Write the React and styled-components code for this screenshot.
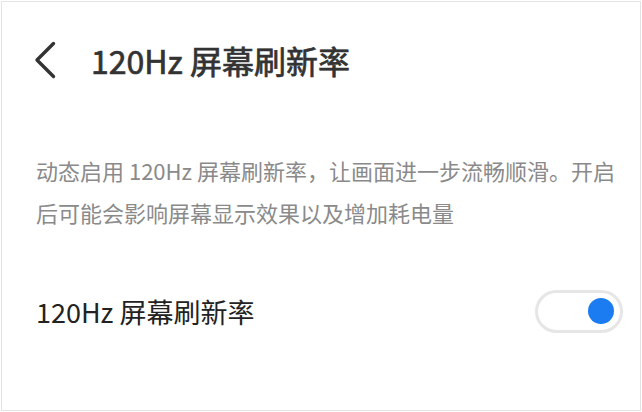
import React, { useState } from "react";
import styled, { createGlobalStyle } from "styled-components";

const GlobalStyle = createGlobalStyle`
  html, body {
    margin: 0;
    padding: 0;
    background: #ffffff;
  }
  body {
    font-family: "Noto Sans CJK SC", "Noto Sans", sans-serif;
  }
`;

const Screen = styled.div`
  box-sizing: border-box;
  margin: 1px;
  width: 640px;
  height: 410px;
  border: 1px solid #e4e4e4;
  background: #ffffff;
  display: flex;
  flex-direction: column;
  overflow: hidden;
`;

const Header = styled.header`
  height: 116px;
  display: flex;
  align-items: center;
  padding-left: 30px;
  gap: 33px;
`;

const BackButton = styled.button`
  border: 0;
  background: none;
  padding: 0;
  width: 26px;
  height: 40px;
  display: flex;
  align-items: center;
  justify-content: center;
  cursor: pointer;
`;

const Title = styled.h1`
  margin: 0;
  font-size: 32px;
  font-weight: 400;
  -webkit-text-stroke: 0.7px #333333;
  color: #333333;
`;

const Description = styled.p`
  margin: 31px 0 0;
  padding: 0 20px 0 34px;
  font-size: 22px;
  line-height: 42px;
  color: #8a8a8a;
  font-weight: 400;
`;

const Row = styled.div`
  margin-top: 36px;
  height: 84px;
  display: flex;
  align-items: center;
  justify-content: space-between;
  padding: 0 17px 0 34px;
`;

const Label = styled.span`
  font-size: 27px;
  color: #222222;
`;

const Track = styled.button`
  box-sizing: border-box;
  width: 88px;
  height: 43px;
  border-radius: 22px;
  border: 3px solid #e6e6e6;
  background: #ffffff;
  padding: 0 6px;
  display: flex;
  align-items: center;
  justify-content: ${(p) => (p.$on ? "flex-end" : "flex-start")};
  cursor: pointer;
`;

const Knob = styled.span`
  width: 26px;
  height: 26px;
  border-radius: 50%;
  background: ${(p) => (p.$on ? "#1a7cf0" : "#d0d0d0")};
`;

export default function App() {
  const [on, setOn] = useState(true);
  return (
    <>
      <GlobalStyle />
      <Screen>
        <Header>
          <BackButton aria-label="返回">
            <svg width="24" height="38" viewBox="0 0 24 38" fill="none">
              <path
                d="M20.5 2.5 L4 19 L20.5 35.5"
                stroke="#333333"
                strokeWidth="3.4"
                strokeLinecap="round"
                strokeLinejoin="round"
              />
            </svg>
          </BackButton>
          <Title>120Hz 屏幕刷新率</Title>
        </Header>
        <Description>
          动态启用 120Hz 屏幕刷新率，让画面进一步流畅顺滑。开启后可能会影响屏幕显示效果以及增加耗电量
        </Description>
        <Row>
          <Label>120Hz 屏幕刷新率</Label>
          <Track $on={on} onClick={() => setOn(!on)} aria-pressed={on}>
            <Knob $on={on} />
          </Track>
        </Row>
      </Screen>
    </>
  );
}
